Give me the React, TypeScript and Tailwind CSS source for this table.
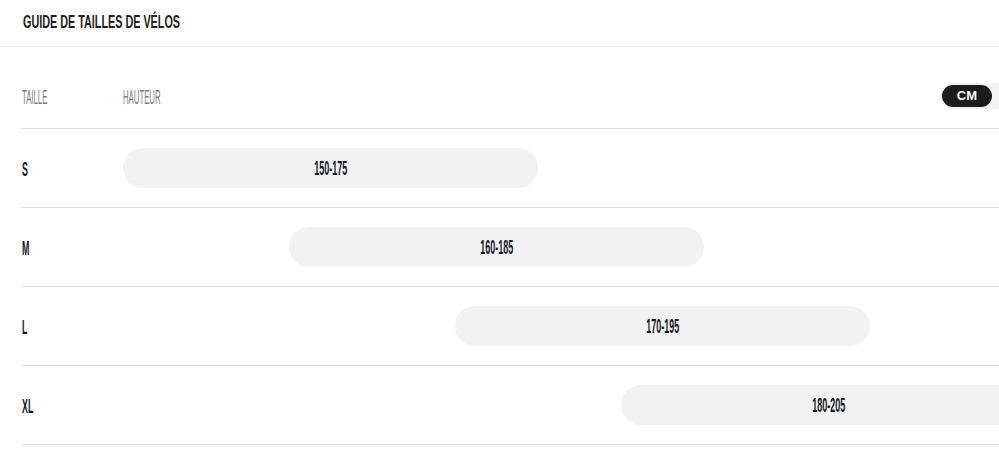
const sizes = [
  { label: 'S', from: 150, to: 175 },
  { label: 'M', from: 160, to: 185 },
  { label: 'L', from: 170, to: 195 },
  { label: 'XL', from: 180, to: 205 },
];

// 16.6px per cm, track starts at 150
const pxPerCm = 16.6;

export default function App() {
  return (
    <div className="w-full h-[466px] overflow-hidden bg-white font-['Liberation_Sans',Arial,sans-serif]">
      {/* Title */}
      <div className="h-[47px] border-b border-[#f0f0f0] flex items-center pl-[23px] pb-[3px]">
        <h2 className="text-[18px] font-bold text-[#222] leading-none whitespace-nowrap">
          <span className="inline-block origin-left scale-x-[0.6]">GUIDE DE TAILLES DE VÉLOS</span>
        </h2>
      </div>

      <div className="ml-[22px] mt-[18px]">
        {/* Header row */}
        <div className="h-[64px] flex items-center border-b border-[#dcdcdc]">
          <div className="w-[101px] text-[21px] text-[#7a7a7a] leading-none">
            <span className="inline-block origin-left scale-x-[0.37]">TAILLE</span>
          </div>
          <div className="flex-1 text-[21px] text-[#7a7a7a] leading-none">
            <span className="inline-block origin-left scale-x-[0.37]">HAUTEUR</span>
          </div>
          <div className="flex items-center rounded-full bg-[#f3f3f3] p-[2px] pr-[40px] -mr-[33px] mt-[-1px]">
            <span className="h-[22px] px-[15px] rounded-full bg-[#1c1c1c] text-white text-[13px] font-bold flex items-center">
              CM
            </span>
          </div>
        </div>

        {/* Rows */}
        {sizes.map((s) => (
          <div key={s.label} className="h-[79px] flex items-center border-b border-[#dcdcdc]">
            <div className="w-[101px] shrink-0 text-[21px] font-bold text-[#111827] leading-none">
              <span className="inline-block origin-left scale-x-[0.42]">{s.label}</span>
            </div>
            <div className="flex-1 relative h-[40px]">
              <div
                className="absolute top-0 h-[40px] w-[415px] rounded-full bg-[#f2f2f2] flex items-center justify-center"
                style={{ left: (s.from - 150) * pxPerCm }}
              >
                <span className="inline-block text-[20px] font-bold text-[#111827] leading-none scale-x-[0.45]">
                  {s.from}-{s.to}
                </span>
              </div>
            </div>
          </div>
        ))}
      </div>
    </div>
  );
}
